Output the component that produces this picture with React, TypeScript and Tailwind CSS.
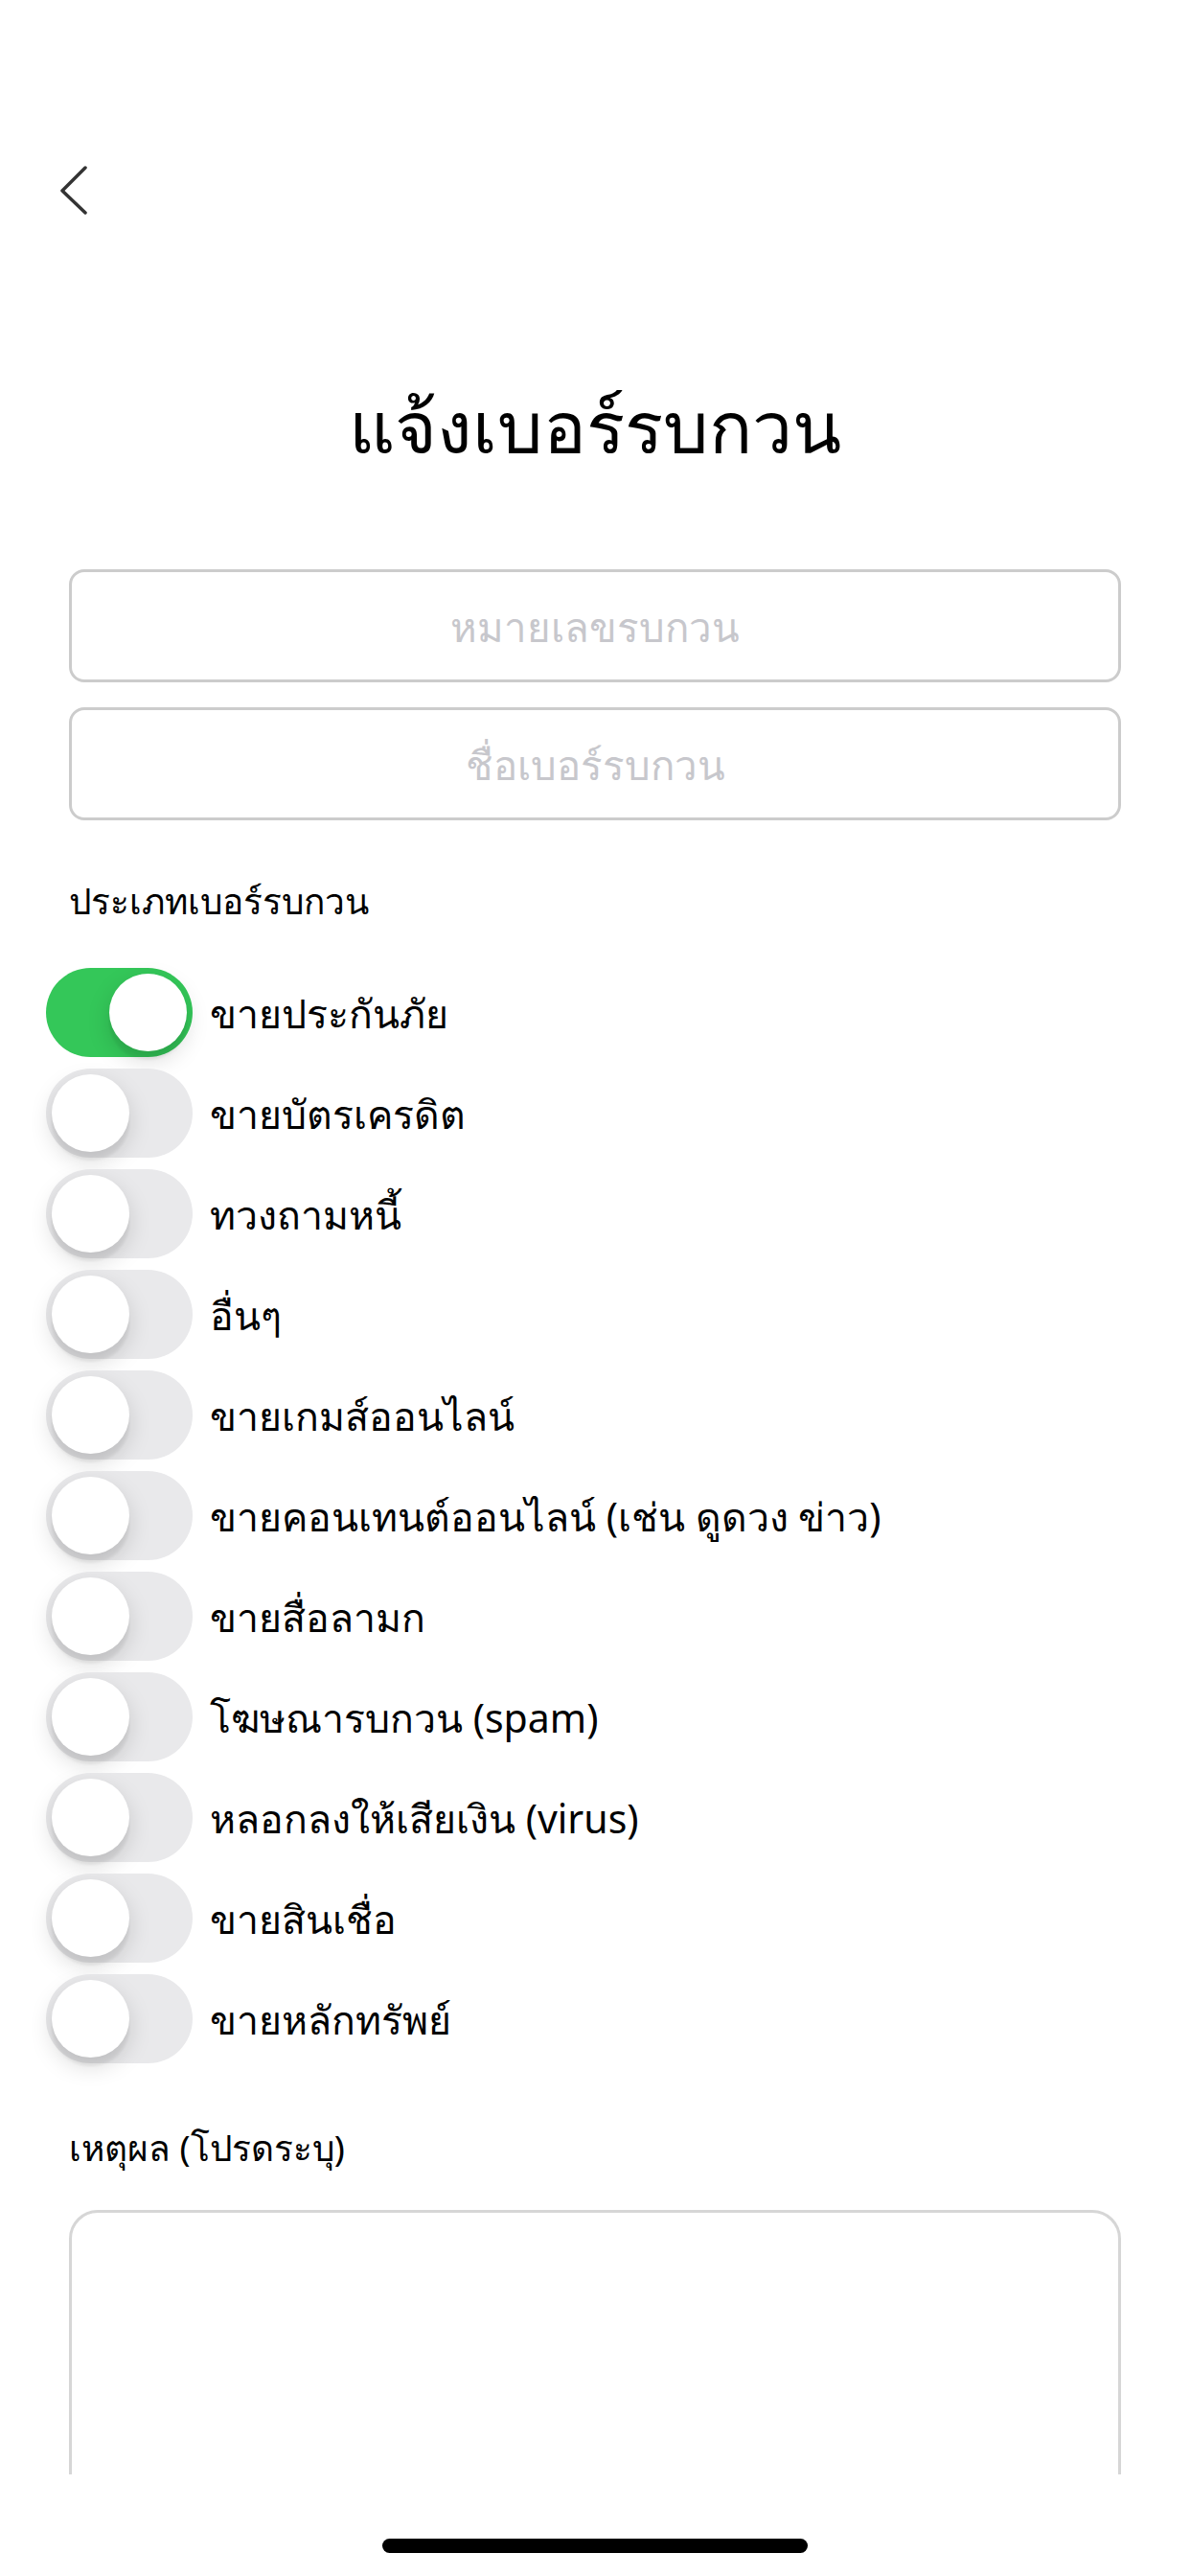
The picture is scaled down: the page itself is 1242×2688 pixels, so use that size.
import React from "react";

const items = [
  { label: "ขายประกันภัย", on: true },
  { label: "ขายบัตรเครดิต", on: false },
  { label: "ทวงถามหนี้", on: false },
  { label: "อื่นๆ", on: false },
  { label: "ขายเกมส์ออนไลน์", on: false },
  { label: "ขายคอนเทนต์ออนไลน์ (เช่น ดูดวง ข่าว)", on: false },
  { label: "ขายสื่อลามก", on: false },
  { label: "โฆษณารบกวน (spam)", on: false },
  { label: "หลอกลงให้เสียเงิน (virus)", on: false },
  { label: "ขายสินเชื่อ", on: false },
  { label: "ขายหลักทรัพย์", on: false },
];

function Toggle({ on }: { on: boolean }) {
  return (
    <div
      className={
        on
          ? "w-[153px] h-[93px] shrink-0 rounded-full p-[6px] bg-[#34c759] flex justify-end items-center"
          : "w-[153px] h-[93px] shrink-0 rounded-full p-[6px] bg-[#e9e9eb] flex justify-start items-center"
      }
    >
      <div className="w-[81px] h-[81px] rounded-full bg-white shadow-[0_9px_24px_rgba(0,0,0,0.15),0_9px_3px_rgba(0,0,0,0.06)]" />
    </div>
  );
}

export default function App() {
  return (
    <div className="w-[1242px] h-[2688px] bg-white flex flex-col overflow-hidden text-black font-['Noto_Sans',sans-serif]">
      <div className="h-[2582px] overflow-hidden flex flex-col">
        <div className="h-[173px] shrink-0" />
        <div className="pl-[62px] h-[52px] shrink-0">
          <svg width="30" height="52" viewBox="0 0 30 52" fill="none">
            <polyline
              points="27,2 3,26 27,49"
              stroke="#333333"
              strokeWidth="3.5"
              strokeLinecap="round"
              strokeLinejoin="round"
            />
          </svg>
        </div>
        <div className="mt-[169px] h-[100px] shrink-0 flex items-center justify-center text-[75px] leading-[100px]">
          แจ้งเบอร์รบกวน
        </div>
        <div className="px-[72px] mt-[100px] flex flex-col gap-[26px]">
          <div className="h-[118px] rounded-[16px] border-[3px] border-[#cccccc] flex items-center justify-center text-[42px] text-[#c7c7cc]">
            หมายเลขรบกวน
          </div>
          <div className="h-[118px] rounded-[16px] border-[3px] border-[#cccccc] flex items-center justify-center text-[42px] text-[#c7c7cc]">
            ชื่อเบอร์รบกวน
          </div>
        </div>
        <div className="px-[72px] mt-[54px] h-[60px] flex items-center text-[37px] leading-[60px]">
          ประเภทเบอร์รบกวน
        </div>
        <div className="mt-[40px] pl-[48px] flex flex-col gap-[12px]">
          {items.map((it) => (
            <div key={it.label} className="flex items-center gap-[18px] h-[93px]">
              <Toggle on={it.on} />
              <span className="text-[41px] leading-[60px]">{it.label}</span>
            </div>
          ))}
        </div>
        <div className="px-[72px] mt-[58px] h-[60px] flex items-center text-[37px] leading-[60px]">
          เหตุผล (โปรดระบุ)
        </div>
        <div className="px-[72px] mt-[35px] shrink-0">
          <div className="h-[400px] rounded-[30px] border-[3px] border-[#d6d6d6]" />
        </div>
      </div>
      <div className="flex-1 flex items-start justify-center">
        <div className="mt-[67px] w-[444px] h-[15px] rounded-full bg-black" />
      </div>
    </div>
  );
}
